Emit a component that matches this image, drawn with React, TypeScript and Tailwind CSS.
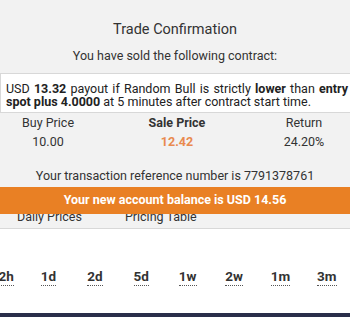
import React from "react";

const periods = ["1d", "2d", "5d", "1w", "2w", "1m", "3m"];

function Period({ label }: { label: string }) {
  return <span className="font-bold text-[13.5px] leading-[18px] border-b border-dotted border-[#555]">{label}</span>;
}

export default function App() {
  return (
    <div
      className="w-[350px] h-[317px] overflow-hidden bg-white text-[#333] flex flex-col"
      style={{ fontFamily: "Roboto, 'Liberation Sans', sans-serif" }}
    >
      <div className="bg-[#f2f2f2] flex flex-col">
        <div className="pt-[20px] text-center text-[14.5px] leading-[20px] text-[#333]">Trade Confirmation</div>
        <div className="mt-[8px] text-center text-[12.5px] leading-[16px]">You have sold the following contract:</div>
        <div className="mt-[9px] bg-white border-y border-l border-[#d8d8d8] pl-[5px] pr-[2px] pt-[8px] pb-[4px] text-[12.5px] leading-[13px] text-justify text-[#222]">
          USD <b>13.32</b> payout if Random Bull is strictly <b>lower</b> than <b>entry spot plus 4.0000</b> at 5 minutes after contract start time.
        </div>
        <div className="grid grid-cols-[96px_1fr_92px] text-[12.5px] leading-[19px] text-center">
          <div>Buy Price</div>
          <div className="font-bold">Sale Price</div>
          <div>Return</div>
          <div>10.00</div>
          <div className="font-bold text-[#e98a4f]">12.42</div>
          <div>24.20%</div>
        </div>
        <div className="mt-[17px] text-center text-[12.5px] leading-[16px]">Your transaction reference number is 7791378761</div>
        <div className="relative z-10 mt-[3px] h-[27px] bg-[#e98024] text-white font-bold text-[12.5px] flex items-center justify-center">
          Your new account balance is USD 14.56
        </div>
        <div className="-mt-[3px] h-[18px] border-b border-[#d8d8d8] flex items-end pb-[3px] text-[12.5px] leading-[16px]">
          <span className="ml-[17px]">Daily Prices</span>
          <span className="ml-[43px]">Pricing Table</span>
        </div>
      </div>
      <div className="flex-1 bg-white flex items-start pt-[38px]">
        <div className="flex -ml-[13px]">
          <div className="w-[38.3px] flex justify-center">
            <Period label="2h" />
          </div>
          {periods.map((p) => (
            <div key={p} className="w-[46.4px] flex justify-center">
              <Period label={p} />
            </div>
          ))}
        </div>
      </div>
      <div className="h-[4px] bg-[#2a2e4a]" />
    </div>
  );
}
